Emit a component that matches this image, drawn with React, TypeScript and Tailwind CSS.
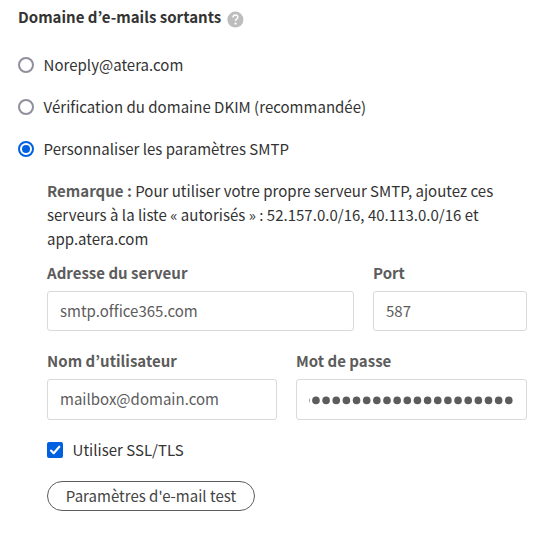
import { useState } from "react";

const OPTIONS = [
  { id: "noreply", label: "Noreply@atera.com" },
  { id: "dkim", label: "Vérification du domaine DKIM (recommandée)" },
  { id: "smtp", label: "Personnaliser les paramètres SMTP" },
];

const Radio = ({ checked }: { checked: boolean }) => (
  <span
    className={
      checked
        ? "flex size-4 shrink-0 items-center justify-center rounded-full border-2 border-[#0060df] bg-white"
        : "flex size-4 shrink-0 items-center justify-center rounded-full border-2 border-[#8f8f9d] bg-white"
    }
  >
    {checked && <span className="size-2 rounded-full bg-[#0060df]"></span>}
  </span>
);

const inputClass =
  "block w-full rounded-[3px] border border-[#d9d9d9] bg-white px-3 text-[#5c5c5c] outline-none";
const labelClass = "block h-6 font-bold text-[#5c5c5c]";

const App = () => {
  const [selected, setSelected] = useState("smtp");
  const [server, setServer] = useState("smtp.office365.com");
  const [port, setPort] = useState("587");
  const [user, setUser] = useState("mailbox@domain.com");
  const [ssl, setSsl] = useState(true);

  return (
    <div className="h-[540px] w-[550px] overflow-hidden bg-white font-['Noto_Sans_CJK_KR',sans-serif] text-[15px] leading-6 tracking-[0.015px] text-[#333333]">
      <div className="flex items-center pt-[5px] pl-[18px]">
        <h2 className="font-bold whitespace-nowrap">Domaine d’e-mails sortants</h2>
        <svg className="mt-[5px] ml-1.5 size-4 overflow-visible" viewBox="-0.4 0.4 16 16" fill="none">
          <circle cx="8" cy="8" r="8" fill="#bdbdbd" />
          <path d="M5.6 5.9C5.7 4.2 6.6 3.4 8 3.4c1.4 0 2.4.8 2.4 2.1 0 1.9-2.3 2-2.3 4" stroke="#fff" strokeWidth="1.5" />
          <circle cx="8.1" cy="12" r="1.1" fill="#fff" />
        </svg>
      </div>

      <div className="mt-6 flex flex-col gap-[18px] pl-[18px]">
        {OPTIONS.map((option) => (
          <div
            key={option.id}
            role="radio"
            aria-checked={selected === option.id}
            onClick={() => setSelected(option.id)}
            className="flex h-6 items-center gap-[9.6px] whitespace-nowrap"
          >
            <Radio checked={selected === option.id} />
            <span>{option.label}</span>
          </div>
        ))}
      </div>

      <div className="mt-[18px] ml-[47px] w-[480px]">
        <p className="whitespace-nowrap">
          <b className="text-[#5c5c5c]">Remarque :</b> Pour utiliser votre propre serveur SMTP, ajoutez ces
          <br />
          serveurs à la liste « autorisés » : 52.157.0.0/16, 40.113.0.0/16 et
          <br />
          app.atera.com
        </p>

        <div className="mt-[10px] flex gap-[19px]">
          <label className="w-[307px]">
            <span className={labelClass}>Adresse du serveur</span>
            <input className={`${inputClass} mt-[6px] h-10 pb-[2px]`} value={server} onChange={(e) => setServer(e.target.value)} />
          </label>
          <label className="w-[154px]">
            <span className={labelClass}>Port</span>
            <input className={`${inputClass} mt-[6px] h-10 pb-[2px]`} value={port} onChange={(e) => setPort(e.target.value)} />
          </label>
        </div>

        <div className="mt-[18px] flex gap-[19px]">
          <label className="w-[230px]">
            <span className={labelClass}>Nom d’utilisateur</span>
            <input className={`${inputClass} mt-[6px] h-[41px] pb-[2px]`} value={user} onChange={(e) => setUser(e.target.value)} />
          </label>
          <div className="w-[231px]">
            <span className={labelClass}>Mot de passe</span>
            {/* Mot de passe masqué, défilé jusqu'à la fin */}
            <div className={`${inputClass} mt-[6px] h-[41px]`}>
              <svg className="block h-[39px] w-[205px]" viewBox="0 0 205 39" fill="#5c5c5c">
                {Array.from({ length: 21 }, (_, i) => (
                  <circle key={i} cx={199.8 - i * 10.15} cy="20.4" r="3.8" />
                ))}
              </svg>
            </div>
          </div>
        </div>

        <div
          role="checkbox"
          aria-checked={ssl}
          onClick={() => setSsl(!ssl)}
          className="mt-[18px] flex h-6 items-center gap-[9.6px]"
        >
          <span className="flex size-4 items-center justify-center rounded-[2px] bg-[#0060df]">
            {ssl && (
              <svg className="size-4" viewBox="0 0 16 16" fill="none" stroke="#fff" strokeWidth="2.1" strokeLinecap="round" strokeLinejoin="round">
                <path d="M4 8.5l2.7 2.7L12.3 4.7" />
              </svg>
            )}
          </span>
          <span>Utiliser SSL/TLS</span>
        </div>

        <button className="mt-[19px] flex h-[30px] w-[208px] items-center justify-center rounded-full border border-[#5c5c5c] bg-white whitespace-nowrap text-[#444444]">
          Paramètres d'e-mail test
        </button>
      </div>
    </div>
  );
};

export default App;
